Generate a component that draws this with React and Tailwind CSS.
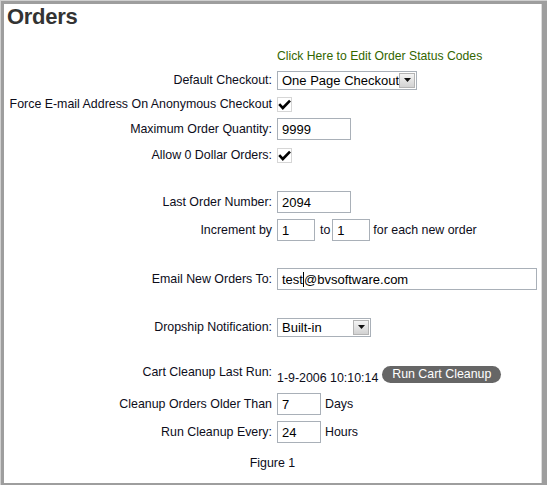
import React from 'react';

// Simple boxed value, looks like an old XP-style textbox
const Box = ({ w, children }) => (
  <div className={`${w} h-[22px] border border-[#a9b0b8] bg-white flex items-center pl-[4px] text-[13px] text-black leading-none whitespace-nowrap`}>
    {children}
  </div>
);

const Select = ({ w, value }) => (
  <div className={`${w} h-[19px] border border-[#a9b0b8] bg-white flex items-center justify-between pl-[4px] pr-[1px]`}>
    <span className="text-[13px] text-black leading-none whitespace-nowrap">{value}</span>
    <div className="w-[16px] h-[15px] border border-[#b4b4b4] bg-gradient-to-b from-[#f4f4f4] to-[#d2d2d2] flex items-center justify-center">
      <svg width="7" height="4" viewBox="0 0 7 4">
        <path d="M0 0h7L3.5 4z" fill="#111" />
      </svg>
    </div>
  </div>
);

const Check = () => (
  <div className="w-[15px] h-[15px] border border-[#d6d6d6] bg-white flex items-center justify-center">
    <svg width="13" height="11" viewBox="0 0 13 11">
      <path d="M1.2 5.2l3.6 3.8L12 1.6" fill="none" stroke="#000" strokeWidth="2.6" />
    </svg>
  </div>
);

const Row = ({ label, mt = 'mt-0', h = 'h-[24px]', children }) => (
  <div className={`flex items-center ${mt} ${h}`}>
    <div className="w-[268px] text-right text-[12.4px] text-[#0d0d1a] leading-[14px] whitespace-nowrap">{label}</div>
    <div className="ml-[5px] flex items-center">{children}</div>
  </div>
);

export default function App() {
  return (
    <div className="w-[547px] h-[485px] bg-[#9e9e9e] border-t border-l border-[#d0d0d0] font-['Liberation_Sans',Arial,sans-serif]">
      <div className="w-full h-full p-[3px] pr-[5px] pb-[2px]">
        <div className="w-full h-full bg-white border-r border-[#dcdcdc] flex flex-col">
          <h1 className="text-[22px] font-bold leading-[26px] text-[#333] pl-[3px] tracking-[-0.3px]">Orders</h1>

          <Row label="" mt="mt-[15px]" h="h-[23px]">
            <span className="text-[12.2px] text-[#336600] leading-none">Click Here to Edit Order Status Codes</span>
          </Row>
          <Row label="Default Checkout:">
            <Select w="w-[140px]" value="One Page Checkout" />
          </Row>
          <Row label="Force E-mail Address On Anonymous Checkout">
            <Check />
          </Row>
          <Row label="Maximum Order Quantity:" mt="mt-[1px]">
            <Box w="w-[74px]">9999</Box>
          </Row>
          <Row label="Allow 0 Dollar Orders:" mt="mt-[2px]">
            <Check />
          </Row>

          <Row label="Last Order Number:" mt="mt-[23px]">
            <Box w="w-[74px]">2094</Box>
          </Row>
          <Row label="Increment by" mt="mt-[4px]">
            <Box w="w-[38px]">1</Box>
            <span className="text-[12.4px] text-[#0d0d1a] ml-[5px] mr-[2px]">to</span>
            <Box w="w-[38px]">1</Box>
            <span className="text-[12.4px] text-[#0d0d1a] ml-[3px]">for each new order</span>
          </Row>

          <Row label="Email New Orders To:" mt="mt-[25px]">
            <Box w="w-[260px]">
              test<span className="inline-block w-px h-[15px] bg-black" />@bvsoftware.com
            </Box>
          </Row>

          <Row label="Dropship Notification:" mt="mt-[24px]">
            <Select w="w-[94px]" value="Built-in" />
          </Row>

          <div className="flex items-start mt-[22px] h-[24px]">
            <div className="w-[268px] text-right text-[12.4px] text-[#0d0d1a] leading-[14px] pt-[4px]">Cart Cleanup Last Run:</div>
            <div className="ml-[5px] flex items-start">
              <span className="text-[12.4px] text-[#0d0d1a] leading-[14px] pt-[10px] whitespace-nowrap">1-9-2006 10:10:14</span>
              <button className="ml-[4px] mt-[5px] w-[119px] h-[17px] rounded-full bg-[#666] text-white text-[12.4px] leading-none">
                Run Cart Cleanup
              </button>
            </div>
          </div>
          <Row label="Cleanup Orders Older Than" mt="mt-[7px]">
            <Box w="w-[44px]">7</Box>
            <span className="text-[12.4px] text-[#0d0d1a] ml-[4px]">Days</span>
          </Row>
          <Row label="Run Cleanup Every:" mt="mt-[4px]">
            <Box w="w-[44px]">24</Box>
            <span className="text-[12.4px] text-[#0d0d1a] ml-[4px]">Hours</span>
          </Row>

          <div className="mt-[7px] h-[24px] flex items-center justify-center text-[12.4px] text-[#0d0d1a]">Figure 1</div>
        </div>
      </div>
    </div>
  );
}
